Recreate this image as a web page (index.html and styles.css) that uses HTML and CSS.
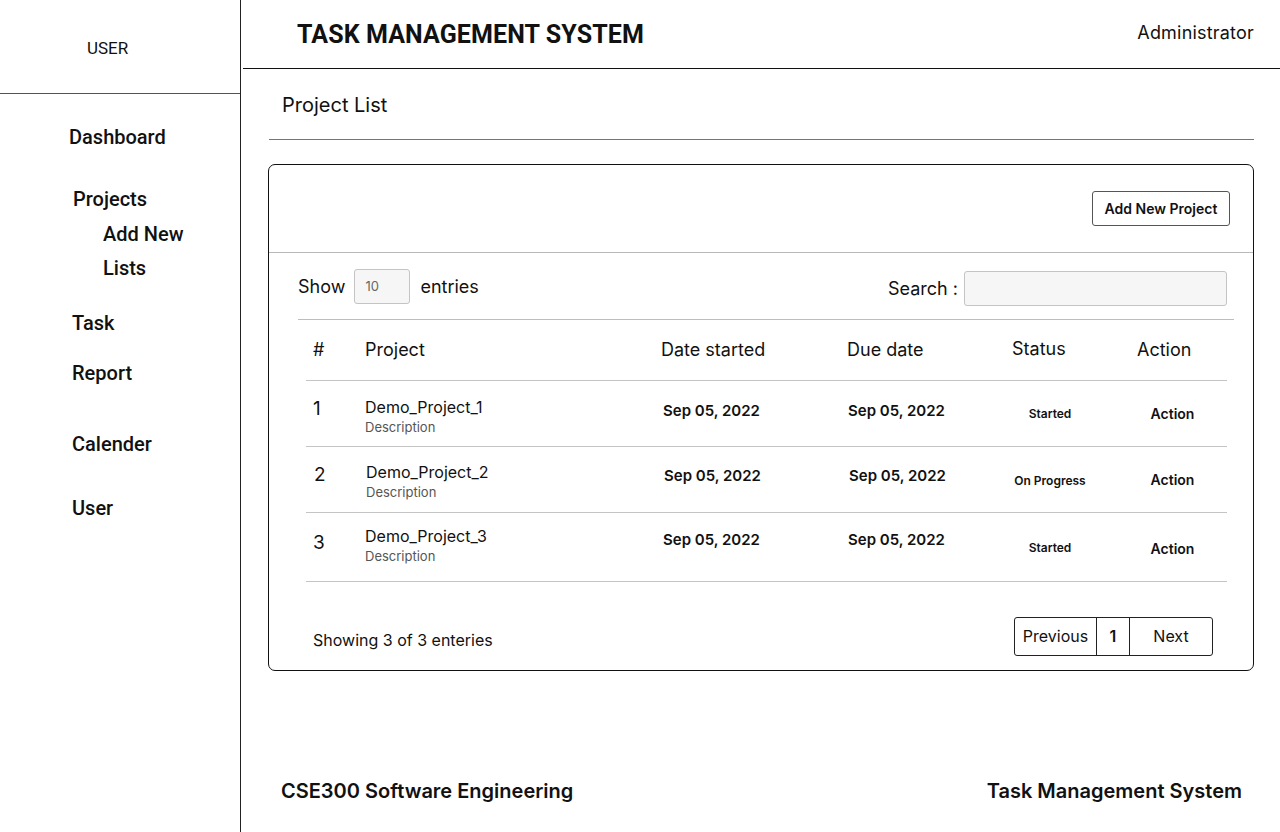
FILE: index.html
```html
<!DOCTYPE html>
<html lang="en">
<head>
<meta charset="utf-8">
<title>Task Management System</title>
<link rel="stylesheet" href="styles.css">
</head>
<body>
<div class="app">
  <aside class="sidebar">
    <div class="user-box">USER</div>
    <nav class="nav">
      <a class="nav-item nav-dashboard">Dashboard</a>
      <a class="nav-item nav-projects">Projects</a>
      <a class="nav-sub nav-addnew">Add New</a>
      <a class="nav-sub nav-lists">Lists</a>
      <a class="nav-item nav-task">Task</a>
      <a class="nav-item nav-report">Report</a>
      <a class="nav-item nav-calender">Calender</a>
      <a class="nav-item nav-user">User</a>
    </nav>
  </aside>
  <main class="main">
    <header class="topbar">
      <h1 class="title">TASK MANAGEMENT SYSTEM</h1>
      <span class="role">Administrator</span>
    </header>
    <section class="content">
      <h2 class="page-title">Project List</h2>
      <div class="card">
        <div class="card-head">
          <button class="btn-add">Add New Project</button>
        </div>
        <div class="controls">
          <div class="show">
            <span>Show</span>
            <span class="select">10</span>
            <span>entries</span>
          </div>
          <div class="search">
            <span>Search :</span>
            <span class="search-input"></span>
          </div>
        </div>
        <div class="table">
          <div class="thead">
            <div class="c-num">#</div>
            <div class="c-proj">Project</div>
            <div class="c-date">Date started</div>
            <div class="c-due">Due date</div>
            <div class="c-status th-status">Status</div>
            <div class="c-action">Action</div>
          </div>
          <div class="tbody">
            <div class="row row-first">
              <div class="c-num num">1</div>
              <div class="c-proj proj"><div class="pname">Demo_Project_1</div><div class="pdesc">Description</div></div>
              <div class="c-date date">Sep 05, 2022</div>
              <div class="c-due date">Sep 05, 2022</div>
              <div class="c-status status">Started</div>
              <div class="c-action action">Action</div>
            </div>
            <div class="row row-mid">
              <div class="c-num num">2</div>
              <div class="c-proj proj"><div class="pname">Demo_Project_2</div><div class="pdesc">Description</div></div>
              <div class="c-date date">Sep 05, 2022</div>
              <div class="c-due date">Sep 05, 2022</div>
              <div class="c-status status">On Progress</div>
              <div class="c-action action">Action</div>
            </div>
            <div class="row row-last">
              <div class="c-num num">3</div>
              <div class="c-proj proj"><div class="pname">Demo_Project_3</div><div class="pdesc">Description</div></div>
              <div class="c-date date">Sep 05, 2022</div>
              <div class="c-due date">Sep 05, 2022</div>
              <div class="c-status status">Started</div>
              <div class="c-action action">Action</div>
            </div>
          </div>
        </div>
        <div class="card-foot">
          <span class="showing">Showing 3 of 3 enteries</span>
          <div class="pager">
            <span class="pg pg-prev">Previous</span>
            <span class="pg pg-num">1</span>
            <span class="pg pg-next">Next</span>
          </div>
        </div>
      </div>
    </section>
    <footer class="footer">
      <span>CSE300 Software Engineering</span>
      <span>Task Management System</span>
    </footer>
  </main>
</div>
</body>
</html>
```

FILE: styles.css
```css
* { box-sizing: border-box; }
html, body { margin: 0; padding: 0; }
body {
  width: 1280px;
  height: 832px;
  overflow: hidden;
  background: #fff;
  color: #111;
  font-family: Inter, "Liberation Sans", sans-serif;
}
.app {
  display: flex;
  height: 832px;
}

/* Sidebar */
.sidebar {
  width: 241px;
  flex: none;
  border-right: 1px solid #222;
  font-family: Roboto, "Liberation Sans", sans-serif;
}
.user-box {
  height: 94px;
  border-bottom: 1px solid #555;
  padding: 38px 0 0 87px;
  font-size: 17px;
  line-height: 20px;
  color: #111;
}
.nav {
  display: flex;
  flex-direction: column;
  padding-top: 31px;
}
.nav-item, .nav-sub {
  display: block;
  font-size: 20px;
  line-height: 24px;
  font-weight: 500;
  color: #111;
}
.nav-dashboard { padding-left: 69px; }
.nav-projects { padding-left: 73px; margin-top: 38px; }
.nav-addnew { padding-left: 103px; margin-top: 11px; }
.nav-lists { padding-left: 103px; margin-top: 10px; }
.nav-task { padding-left: 72px; margin-top: 31px; }
.nav-report { padding-left: 72px; margin-top: 26px; }
.nav-calender { padding-left: 72px; margin-top: 47px; }
.nav-user { padding-left: 72px; margin-top: 40px; }

/* Main */
.main {
  flex: 1;
  display: flex;
  flex-direction: column;
  min-width: 0;
}
.topbar {
  height: 69px;
  border-bottom: 1.5px solid #111;
  display: flex;
  justify-content: space-between;
  align-items: flex-start;
  padding: 0 26px 0 54px;
  margin-left: 2px;
}
.title {
  margin: 20px 0 0 0;
  font-family: Roboto, "Liberation Sans", sans-serif;
  font-size: 25px;
  line-height: 30px;
  font-weight: 700;
  letter-spacing: 0.1px;
}
.role {
  margin-top: 21px;
  font-size: 18px;
  line-height: 24px;
  letter-spacing: 0.2px;
}
.content {
  padding: 0 26px 0 27px;
}
.page-title {
  margin: 0;
  padding: 21px 0 0 13px;
  height: 71px;
  border-bottom: 1px solid #6f68c9;
  font-size: 20px;
  line-height: 30px;
  font-weight: 400;
  margin-left: 1px;
}
.card {
  margin-top: 24px;
  border: 1px solid #111;
  border-radius: 7px;
  height: 507px;
  display: flex;
  flex-direction: column;
}
.card-head {
  height: 88px;
  border-bottom: 1px solid #b8b8b8;
  display: flex;
  justify-content: flex-end;
  align-items: center;
  padding-right: 23px;
}
.btn-add {
  width: 138px;
  height: 35px;
  border: 1px solid #555;
  border-radius: 3px;
  background: #fff;
  font-family: Inter, "Liberation Sans", sans-serif;
  font-size: 14px;
  font-weight: 600;
  color: #111;
  padding: 0;
  margin-top: -1px;
}
.controls {
  display: flex;
  justify-content: space-between;
  align-items: center;
  height: 67px;
  margin: 0 19px 0 29px;
  border-bottom: 1px solid #bdbdbd;
  font-size: 18px;
  padding-top: 3px;
}
.show, .search {
  display: flex;
  align-items: center;
}
.show { gap: 9px; margin-top: -2px; }
.show .select {
  width: 56px;
  height: 35px;
  border: 1px solid #c4c4c4;
  border-radius: 3px;
  background: #f6f6f6;
  font-size: 13px;
  color: #666;
  padding: 8px 0 0 10px;
  line-height: 17px;
  margin-right: 1px;
}
.search { gap: 6px; margin-right: 7px; margin-top: 1px; }
.search-input {
  width: 263px;
  height: 35px;
  border: 1px solid #c4c4c4;
  border-radius: 3px;
  background: #f6f6f6;
}

/* Table */
.table {
  margin: 0 26px 0 37px;
}
.thead, .row {
  display: grid;
  grid-template-columns: 59px 296px 186px 145px 116px 1fr;
}
.thead {
  height: 61px;
  border-bottom: 1.5px solid #c4c4c4;
  align-items: center;
  font-size: 18px;
  padding-bottom: 2px;
}
.c-num { padding-left: 7px; }
.th-status { margin-top: -1px; }
.thead .c-status { text-align: left; padding-left: 20px; }
.thead .c-action { padding-left: 29px; }
.row {
  height: 66px;
  border-bottom: 1.5px solid #c4c4c4;
  align-items: center;
}
.row-last { height: 69px; }
.num { font-size: 19px; margin-top: -11px; }
.row-mid .num { padding-left: 8px; }
.pname { font-size: 16px; line-height: 20px; }
.pdesc { font-size: 13px; line-height: 20px; color: #555; }
.row-first .proj { margin-top: 7px; }
.row-mid .proj { margin-top: 4px; padding-left: 1px; }
.row-last .proj { margin-top: -3px; }
.date { font-size: 15px; font-weight: 600; padding-left: 2px; margin-top: -6px; }
.c-due.date { padding-left: 1px; }
.row-mid .date { margin-top: -8px; padding-left: 3px; }
.row-mid .c-due.date { padding-left: 2px; }
.status {
  font-size: 12px;
  font-weight: 600;
  text-align: center;
  margin-top: 0;
}
.row-mid .status { margin-top: 2px; }
.action {
  font-size: 14px;
  font-weight: 600;
  text-align: center;
  padding-left: 10px;
  margin-top: 0;
}
.row-last .num { margin-top: -10px; }
.row-last .date { margin-top: -16px; }
.row-last .status { margin-top: 1px; }
.row-last .action { margin-top: 3px; }

.card-foot {
  flex: 1;
  display: flex;
  justify-content: space-between;
  align-items: center;
  padding: 20px 40px 0 44px;
}
.showing { font-size: 16px; margin-top: 8px; }
.pager {
  display: flex;
  height: 39px;
  border: 1px solid #222;
  border-radius: 3px;
}
.pg {
  display: flex;
  align-items: center;
  justify-content: center;
  font-size: 16px;
}
.pg-prev { width: 82px; border-right: 1.5px solid #222; }
.pg-num { width: 33px; border-right: 1.5px solid #222; font-weight: 600; }
.pg-next { width: 82px; }

.footer {
  margin-top: auto;
  display: flex;
  justify-content: space-between;
  padding: 0 38px 29px 40px;
  font-size: 20px;
  line-height: 24px;
  font-weight: 600;
}
```
